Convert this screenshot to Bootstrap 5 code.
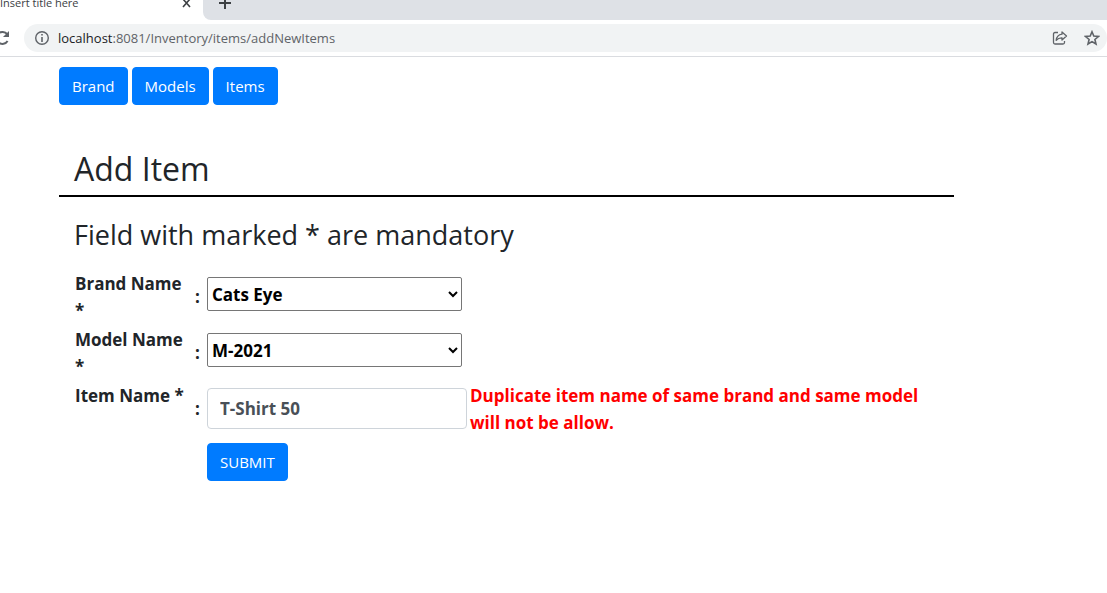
<!DOCTYPE html>
<html lang="en">
<head>
<meta charset="utf-8">
<meta name="viewport" content="width=device-width, initial-scale=1">
<title>Insert title here</title>
<link href="https://cdn.jsdelivr.net/npm/bootstrap@5.3.0/dist/css/bootstrap.min.css" rel="stylesheet">
<style>
  body { font-family: "Open Sans", "Noto Sans", sans-serif; color: #212529; }
  .tab-strip { height: 20px; background: #fff; }
  .tab-active { width: 203px; height: 20px; font-size: 11px; line-height: 16px; color: #3c4043; }
  .tab-active span { margin-top: -5px; }
  .tab-rest { background: #dee1e6; border-bottom-left-radius: 8px; padding-left: 15px; }
  .icon-btn { border: 0; padding: 0; background: none; color: #3c4043; display: flex; line-height: 1; }
  .toolbar-row { height: 37px; border-bottom: 1px solid #dadce0; color: #5f6368; }
  .omnibox { height: 28px; background: #f1f3f4; border-radius: 14px; padding: 0 7px 0 10px; }
  .address { font-size: 13px; padding-top: 1px; color: #5f6368; }
  .address b { font-weight: 400; color: #202124; }
  .page-body { padding: 10px 59px 0; }
  .btn-primary { --bs-btn-bg: #007bff; --bs-btn-border-color: #007bff; --bs-btn-border-radius: 4px; --bs-btn-font-size: 15px; --bs-btn-line-height: 26px; --bs-btn-padding-y: 5px; height: 38px; }
  .form-panel { max-width: 895px; margin-top: 44px; }
  .form-panel h2 { font-size: 32px; line-height: 40px; margin: 0; padding: 0 15px 6px; border-bottom: 2px solid #000; }
  .form-panel h3 { font-size: 27px; line-height: 34px; margin: 0; padding: 21px 15px 0; }
  h2, h3 { font-weight: 500; }
  .item-form { display: grid; grid-template-columns: 120px 12px 260px minmax(0, 1fr); padding: 18px 26px 0 16px; font-size: 17px; line-height: 27px; font-weight: 700; }
  .item-form > * { min-height: 56px; }
  .item-form label { padding-right: 8px; }
  .colon { padding-top: 13px; }
  .brand-select { width: 255px; height: 34px; border: 1px solid #767676; border-radius: 2px; background: #fff; color: #000; font-weight: 700; }
  .item-form .form-control { height: 41px; border: 1px solid #ced4da; border-radius: 4px; font-size: 17px; font-weight: 700; color: #495057; padding: 6px 12px; }
  .field-cell { padding-top: 7px; }
  .text-cell { padding-top: 6px; }
  .error-note { color: #f00; padding-left: 3px; }
  .submit-cell { grid-column: 3; padding-top: 5px; }
</style>
</head>
<body>
<header>
  <div class="tab-strip d-flex">
    <div class="tab-active d-flex justify-content-between flex-shrink-0">
      <span>Insert title here</span>
      <button class="icon-btn pe-2 me-1" type="button" aria-label="Close tab"><svg width="9" height="9" viewBox="0 0 9 9"><path d="M1-1 8 7M8-1 1 7" stroke="currentColor" stroke-width="1.6"/></svg></button>
    </div>
    <div class="tab-rest flex-grow-1">
      <button class="icon-btn" type="button" aria-label="New tab"><svg width="14" height="10" viewBox="0 0 14 10"><path d="M7-3V9M1 3H13" stroke="currentColor" stroke-width="2"/></svg></button>
    </div>
  </div>
  <div class="toolbar-row d-flex align-items-center">
    <button class="icon-btn" type="button" aria-label="Reload"><svg width="24" height="16" viewBox="0 0 24 16"><path d="M7.6 11A6 6 0 1 1 7.2 4.2" fill="none" stroke="#5f6368" stroke-width="2"/><path d="M9 1V7H3Z" fill="#5f6368"/></svg></button>
    <div class="omnibox d-flex align-items-center flex-grow-1">
      <svg width="16" height="16" viewBox="0 0 16 16" aria-hidden="true"><circle cx="8" cy="8" r="6.3" fill="none" stroke="currentColor" stroke-width="1.4"/><path d="M8 7V12M8 4V5.6" stroke="currentColor" stroke-width="1.6"/></svg>
      <div class="address flex-grow-1 ps-2"><b>localhost</b>:8081/Inventory/items/addNewItems</div>
      <button class="icon-btn me-3" type="button" aria-label="Share"><svg width="16" height="16" viewBox="0 0 16 16" fill="none" stroke="#5f6368" stroke-width="1.3" stroke-linejoin="round"><path d="M6 2.5H3Q1.5 2.5 1.5 4V12.5Q1.5 14 3 14H11Q12.5 14 12.5 12.5V11"/><path d="M10 2 14.5 6 10 10V7.8Q6.5 7.6 4.2 10.4 4.7 5 10 4.2Z"/></svg></button>
      <button class="icon-btn" type="button" aria-label="Bookmark"><svg width="16" height="16" viewBox="0 0 16 16"><path d="M8 1.8 9.8 6.1 14.4 6.5 10.9 9.5 12 14 8 11.6 4 14 5.1 9.5 1.6 6.5 6.2 6.1Z" fill="none" stroke="#5f6368" stroke-width="1.6"/></svg></button>
    </div>
  </div>
</header>
<main class="page-body">
  <nav class="d-flex gap-1" aria-label="Sections">
    <a class="btn btn-primary" href="#brand">Brand</a>
    <a class="btn btn-primary" href="#model">Models</a>
    <a class="btn btn-primary" href="#item">Items</a>
  </nav>
  <section class="form-panel">
    <h2>Add Item</h2>
    <h3>Field with marked * are mandatory</h3>
    <form class="item-form">
      <label for="brand">Brand Name *</label>
      <span class="colon">:</span>
      <div class="field-cell"><select class="brand-select" id="brand"><option>Cats Eye</option></select></div>
      <span></span>
      <label for="model">Model Name *</label>
      <span class="colon">:</span>
      <div class="field-cell"><select class="brand-select" id="model"><option>M-2021</option></select></div>
      <span></span>
      <label for="item">Item Name *</label>
      <span class="colon">:</span>
      <div class="text-cell"><input class="form-control" id="item" type="text" value="T-Shirt 50"></div>
      <div class="error-note">Duplicate item name of same brand and same model will not be allow.</div>
      <div class="submit-cell"><button class="btn btn-primary" type="submit">SUBMIT</button></div>
    </form>
  </section>
</main>
<script src="https://cdn.jsdelivr.net/npm/bootstrap@5.3.0/dist/js/bootstrap.bundle.min.js"></script>
</body>
</html>
